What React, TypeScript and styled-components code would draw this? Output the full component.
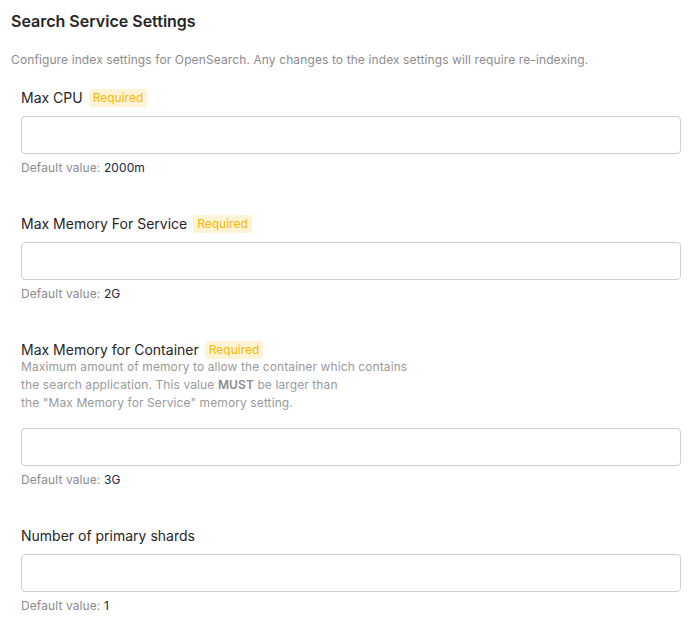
import React from "react";
import styled, { createGlobalStyle } from "styled-components";

const Global = createGlobalStyle`
  body { margin: 0; background: #fff; font-family: Inter, "Noto Sans", sans-serif; color: #262626; }
`;

const Page = styled.div`
  padding: 10px 19px 0 11px;
`;
const Title = styled.h2`
  margin: 0; font-size: 16px; font-weight: 600; line-height: 22px; color: #262626;
`;
const Desc = styled.p`
  margin: 20px 0 0; font-size: 12px; line-height: 16px; color: #8c8c8c; letter-spacing: 0.11px;
`;
const Fields = styled.div`
  display: flex; flex-direction: column; gap: 38px; padding-left: 10px; margin-top: 20px;
`;
const Field = styled.div`
  display: flex; flex-direction: column;
`;
const LabelRow = styled.div`
  display: flex; align-items: center; gap: 6px; font-size: 14px; line-height: 20px; color: #262626;
`;
const Badge = styled.span`
  background: #fff3d6; color: #f5b800; font-size: 12px; line-height: 18px; padding: 0 4px; border-radius: 2px;
`;
const Help = styled.div`
  font-size: 12px; line-height: 18px; color: #9a9a9a; margin-top: -2px; letter-spacing: 0.1px;
  b { font-weight: 600; color: #8c8c8c; }
`;
const Input = styled.input<{ $gap: number }>`
  box-sizing: border-box; height: 38px; width: 100%; margin-top: ${p => p.$gap}px;
  border: 1px solid #cfcfcf; border-radius: 4px; font: inherit; font-size: 14px; padding: 0 10px; outline: none;
`;
const Default = styled.div`
  margin-top: 6px; font-size: 12px; line-height: 16px; color: #8c8c8c; letter-spacing: 0.1px;
  span { color: #1a2540; }
`;

const fields = [
  { label: "Max CPU", req: true, def: "2000m" },
  { label: "Max Memory For Service", req: true, def: "2G" },
  { label: "Max Memory for Container", req: true, def: "3G", help: true },
  { label: "Number of primary shards", req: false, def: "1" },
];

export default function App() {
  return (
    <Page>
      <Global />
      <Title>Search Service Settings</Title>
      <Desc>Configure index settings for OpenSearch. Any changes to the index settings will require re-indexing.</Desc>
      <Fields>
        {fields.map(f => (
          <Field key={f.label}>
            <LabelRow>{f.label}{f.req && <Badge>Required</Badge>}</LabelRow>
            {f.help && (
              <Help>
                Maximum amount of memory to allow the container which contains<br />
                the search application. This value <b>MUST</b> be larger than<br />
                the "Max Memory for Service" memory setting.
              </Help>
            )}
            <Input $gap={f.help ? 16 : 8} />
            <Default>Default value: <span>{f.def}</span></Default>
          </Field>
        ))}
      </Fields>
    </Page>
  );
}
